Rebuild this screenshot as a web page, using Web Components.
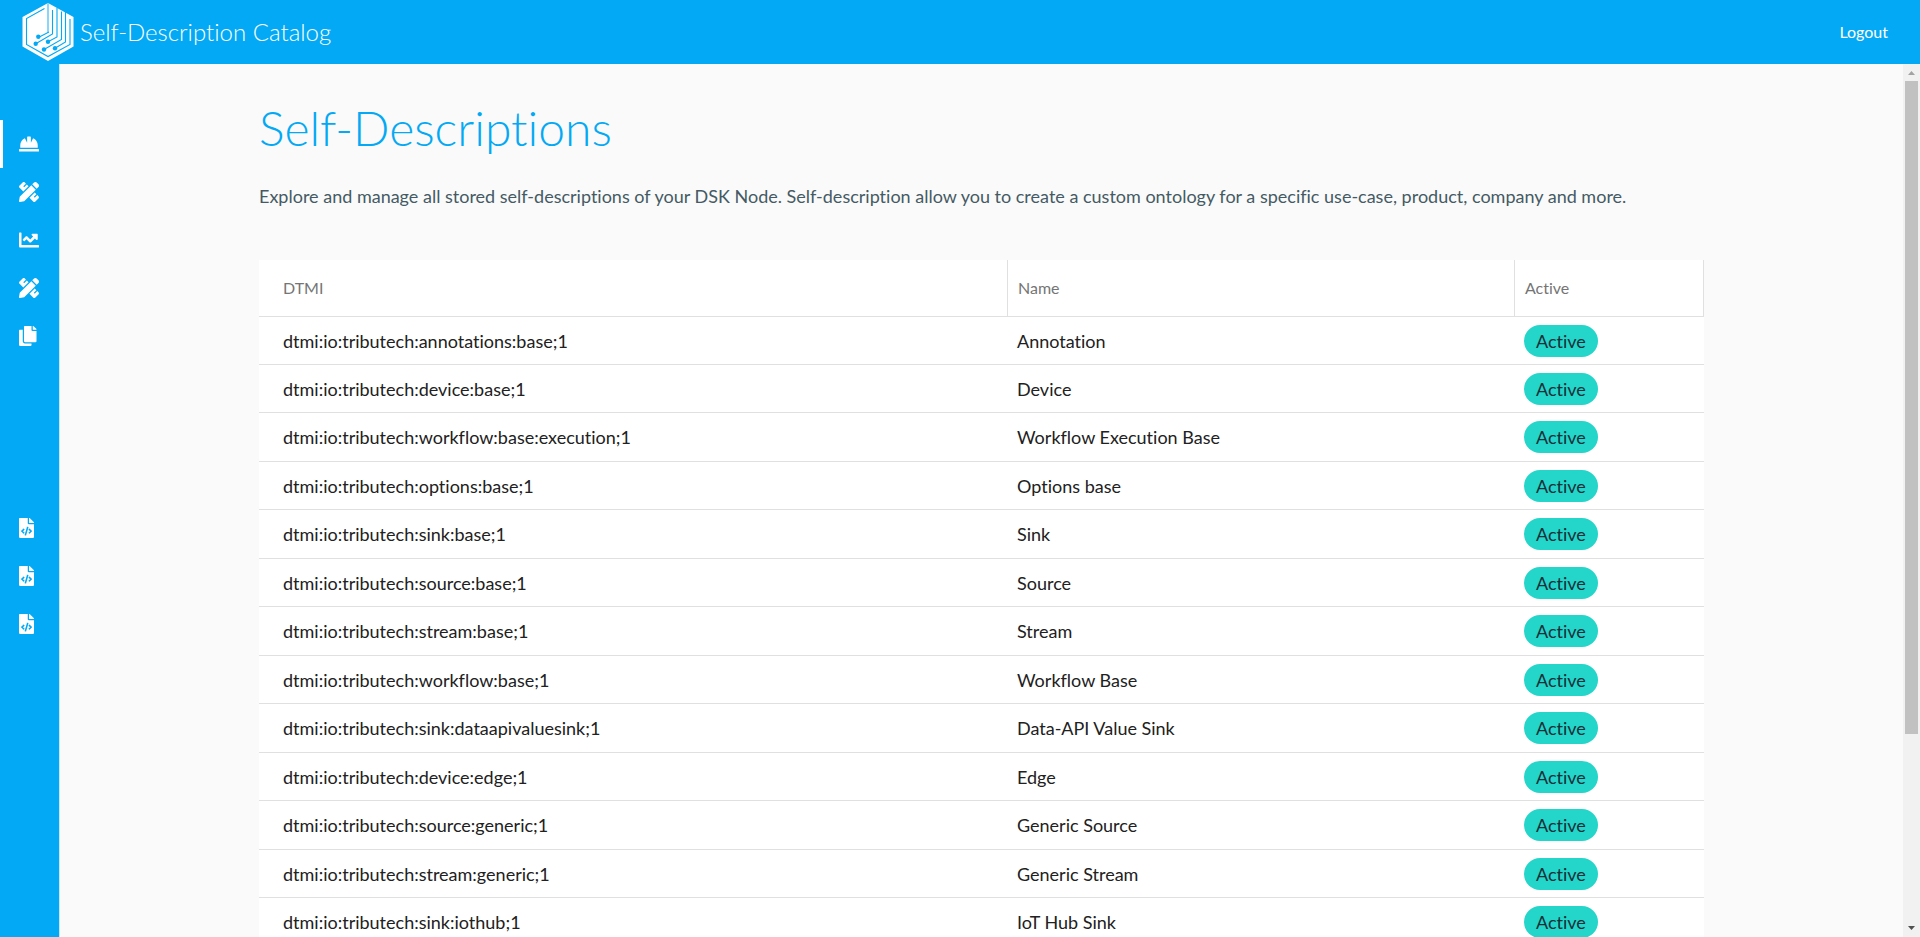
<!DOCTYPE html>
<html lang="en">
<head>
<meta charset="utf-8">
<title>Self-Description Catalog</title>
<style>
html, body { height: 100%; margin: 0; }
body { font-family: Lato, sans-serif; font-variant-ligatures: none; background: #fafafa; overflow: hidden; }
</style>
</head>
<body>
<catalog-app></catalog-app>
<script>
const ICONS = {
  hat: [512, "M480 288c0-80.25-49.28-148.92-119.19-177.62L304 224V80a16 16 0 0 0-16-16h-64a16 16 0 0 0-16 16v144l-56.81-113.62C81.28 139.08 32 207.75 32 288v64h448zm16 96H16a16 16 0 0 0-16 16v32a16 16 0 0 0 16 16h480a16 16 0 0 0 16-16v-32a16 16 0 0 0-16-16z"],
  ruler: [512, "M109.46 244.04l134.58-134.56-44.12-44.12-61.68 61.68a7.919 7.919 0 0 1-11.21 0l-11.21-11.21c-3.1-3.1-3.1-8.12 0-11.21l61.68-61.68-33.64-33.65C131.47-3.1 111.39-3.1 99 9.29L9.29 99c-12.38 12.39-12.39 32.47 0 44.86l100.17 100.18zm388.47-116.8c18.76-18.76 18.75-49.17 0-67.93l-45.25-45.25c-18.76-18.76-49.18-18.76-67.95 0l-46.02 46.01 113.2 113.2 46.02-46.03zM316.08 82.71l-297 296.96L.32 487.11c-2.53 14.49 10.09 27.11 24.59 24.56l107.45-18.84L429.28 195.9 316.08 82.71zm186.63 285.43l-33.64-33.64-61.68 61.68c-3.1 3.1-8.12 3.1-11.21 0l-11.21-11.21c-3.09-3.1-3.09-8.12 0-11.21l61.68-61.68-44.14-44.14L267.93 402.5l100.21 100.2c12.39 12.39 32.47 12.39 44.86 0l89.71-89.7c12.39-12.39 12.39-32.47 0-44.86z"],
  chart: [512, "M496 384H64V80c0-8.84-7.16-16-16-16H16C7.16 64 0 71.16 0 80v336c0 17.67 14.33 32 32 32h464c8.84 0 16-7.16 16-16v-32c0-8.84-7.16-16-16-16zM464 96H345.94c-21.38 0-32.09 25.85-16.97 40.97l32.4 32.4L288 242.75l-73.37-73.37c-12.5-12.5-32.76-12.5-45.25 0l-68.69 68.69c-6.25 6.25-6.25 16.38 0 22.63l22.62 22.62c6.25 6.25 16.38 6.25 22.63 0L192 237.25l73.37 73.37c12.5 12.5 32.76 12.5 45.25 0l96-96 32.4 32.4c15.12 15.12 40.97 4.41 40.97-16.97V112c.01-8.84-7.15-16-15.99-16z"],
  copy: [448, "M320 448v40c0 13.255-10.745 24-24 24H24c-13.255 0-24-10.745-24-24V120c0-13.255 10.745-24 24-24h72v296c0 30.879 25.121 56 56 56h168zm0-344V0H152c-13.255 0-24 10.745-24 24v368c0 13.255 10.745 24 24 24h272c13.255 0 24-10.745 24-24V128H344c-13.2 0-24-10.8-24-24zm120.971-31.029L375.029 7.029A24 24 0 0 0 358.059 0H352v96h96v-6.059a24 24 0 0 0-7.029-16.97z"],
  code: [384, "M384 121.941V128H256V0h6.059c6.365 0 12.47 2.529 16.971 7.029l97.941 97.941A24.005 24.005 0 0 1 384 121.941zM248 160c-13.2 0-24-10.8-24-24V0H24C10.745 0 0 10.745 0 24v464c0 13.255 10.745 24 24 24h336c13.255 0 24-10.745 24-24V160H248zM123.206 400.505a5.4 5.4 0 0 1-7.633.246l-64.866-60.812a5.4 5.4 0 0 1 0-7.879l64.866-60.812a5.4 5.4 0 0 1 7.633.246l19.579 20.885a5.4 5.4 0 0 1-.372 7.747L101.65 336l40.763 35.874a5.4 5.4 0 0 1 .372 7.747l-19.579 20.884zm51.295 50.479l-27.453-7.97a5.402 5.402 0 0 1-3.681-6.692l61.44-211.626a5.402 5.402 0 0 1 6.692-3.681l27.452 7.97a5.4 5.4 0 0 1 3.68 6.692l-61.44 211.626a5.397 5.397 0 0 1-6.69 3.681zm160.792-111.045l-64.866 60.812a5.4 5.4 0 0 1-7.633-.246l-19.58-20.885a5.4 5.4 0 0 1 .372-7.747L284.35 336l-40.763-35.874a5.4 5.4 0 0 1-.372-7.747l19.58-20.885a5.4 5.4 0 0 1 7.633-.246l64.866 60.812a5.4 5.4 0 0 1-.001 7.879z"]
};

class BaseElement extends HTMLElement {
  constructor() {
    super();
    this.attachShadow({ mode: "open" });
  }
  connectedCallback() { this.shadowRoot.innerHTML = this.render(); }
}

customElements.define("catalog-logo", class extends BaseElement {
  render() {
    return `<style>
      :host { display: block; width: 52px; height: 58px; }
      svg { display: block; width: 100%; height: 100%; }
    </style>
    <svg viewBox="0 0 52 58" aria-hidden="true">
      <path fill="#fff" d="M26 0 51.500 14V43.500L26 58 .5 43.500V14z"/>
      <path fill="#8ad6fa" d="M25 0h2v29l-2 1z"/>
      <g fill="none" stroke="#03a9f4" stroke-width="1.100">
        <path d="M22.500 5.500 4.500 15.500V41.500L26 53.500 48 41.500V16"/>
        <path d="M27 29 16.300 34.500"/>
        <path d="M30.500 7V31L13.700 40.700"/>
        <path d="M35 4.500V34L26 38.700"/>
        <path d="M39.500 8.500V36.500L22 46.500"/>
        <path d="M43.500 9V39L33 45.300"/>
      </g>
      <g fill="#03a9f4">
        <circle cx="16.300" cy="33.700" r="2.200"/>
        <circle cx="13.700" cy="40.700" r="2.200"/>
        <circle cx="26" cy="38.700" r="2.200"/>
        <circle cx="22" cy="46.500" r="2.200"/>
        <circle cx="33" cy="45.300" r="2.200"/>
      </g>
    </svg>`;
  }
});

customElements.define("top-bar", class extends BaseElement {
  render() {
    return `<style>
      :host { display: block; }
      header { display: flex; align-items: center; justify-content: space-between; height: 64px; padding: 0 32px 0 22px; box-sizing: border-box; background: #03a9f4; color: #fff; }
      .brand { display: flex; align-items: center; gap: 6px; font-size: 24px; font-weight: 300; line-height: 32px; }
      button { border: 0; padding: 0; background: none; color: inherit; font: 16px/24px Lato, sans-serif; cursor: pointer; }
    </style>
    <header><div class="brand"><catalog-logo></catalog-logo><slot></slot></div><button type="button">Logout</button></header>`;
  }
});

customElements.define("nav-item", class extends BaseElement {
  render() {
    const [w, d] = ICONS[this.getAttribute("icon")];
    return `<style>
      :host { display: block; }
      a { display: flex; align-items: center; height: 48px; padding-left: 16px; border-left: 3px solid transparent; color: #fff; }
      :host([active]) a { border-color: #fff; }
      svg { height: 20px; fill: currentColor; }
    </style>
    <a href="#" aria-label="${this.getAttribute("label")}"><svg viewBox="0 0 ${w} 512"><path d="${d}"/></svg></a>`;
  }
});

customElements.define("side-nav", class extends BaseElement {
  render() {
    return `<style>
      :host { display: block; box-sizing: border-box; width: 60px; background: #03a9f4; border-right: 1px solid #c4e8fa; }
      nav { display: flex; flex-direction: column; padding-top: 56px; }
      .tools { margin-top: 144px; }
    </style>
    <nav aria-label="Main">
      <div>
        <nav-item icon="hat" label="Self-Descriptions" active></nav-item>
        <nav-item icon="ruler" label="Designer"></nav-item>
        <nav-item icon="chart" label="Charts"></nav-item>
        <nav-item icon="ruler" label="Editor"></nav-item>
        <nav-item icon="copy" label="Copies"></nav-item>
      </div>
      <div class="tools">
        <nav-item icon="code" label="Catalog API"></nav-item>
        <nav-item icon="code" label="Twin API"></nav-item>
        <nav-item icon="code" label="Data API"></nav-item>
      </div>
    </nav>`;
  }
});

customElements.define("status-pill", class extends BaseElement {
  render() {
    return `<style>
      :host { display: inline-block; vertical-align: top; height: 32px; padding: 0 12px; border-radius: 16px; background: #24d6c9; color: #132f38; line-height: 32px; }
    </style><slot></slot>`;
  }
});

customElements.define("description-table", class extends BaseElement {
  render() {
    const rows = [
      ["annotations:base", "Annotation"],
      ["device:base", "Device"],
      ["workflow:base:execution", "Workflow Execution Base"],
      ["options:base", "Options base"],
      ["sink:base", "Sink"],
      ["source:base", "Source"],
      ["stream:base", "Stream"],
      ["workflow:base", "Workflow Base"],
      ["sink:dataapivaluesink", "Data-API Value Sink"],
      ["device:edge", "Edge"],
      ["source:generic", "Generic Source"],
      ["stream:generic", "Generic Stream"],
      ["sink:iothub", "IoT Hub Sink"]
    ];
    return `<style>
      :host { display: block; }
      table { width: 100%; table-layout: fixed; border-collapse: separate; border-spacing: 0; background: #fff; color: #212121; font-size: 18px; }
      th, td { box-sizing: border-box; padding: 0 9px; border-bottom: 1px solid #e0e0e0; text-align: left; line-height: 24px; }
      th { height: 57px; padding: 0 10px; border-right: 1px solid #e0e0e0; color: #757575; font-size: 16px; font-weight: 400; }
      td { height: 48px; }
      tbody tr:nth-child(odd):not(:first-child) td { height: 49px; }
      th:first-child, td:first-child { padding-left: 24px; }
      .dtmi { width: 749px; }
      .active { width: 189px; }
    </style>
    <table>
      <colgroup><col class="dtmi"><col><col class="active"></colgroup>
      <thead><tr><th>DTMI</th><th>Name</th><th>Active</th></tr></thead>
      <tbody>${rows.map(([id, name]) => `<tr><td>dtmi:io:tributech:${id};1</td><td>${name}</td><td><status-pill>Active</status-pill></td></tr>`).join("")}</tbody>
    </table>`;
  }
});

customElements.define("scroll-track", class extends BaseElement {
  render() {
    return `<style>
      :host { display: flex; flex-direction: column; width: 17px; background: #f1f1f1; }
      svg { display: block; width: 17px; height: 17px; flex: none; }
      .thumb { flex: 7; margin: 0 2px; background: #c1c1c1; }
      .rest { flex: 2; }
    </style>
    <svg viewBox="0 0 17 17"><path fill="#a3a3a3" d="M5 11h7L8.500 7z"/></svg>
    <div class="thumb"></div><div class="rest"></div>
    <svg viewBox="0 0 17 17"><path fill="#505050" d="M5 6h7L8.500 10z"/></svg>`;
  }
});

customElements.define("catalog-app", class extends BaseElement {
  render() {
    return `<style>
      :host { display: flex; flex-direction: column; height: 100vh; }
      .body { display: flex; flex: 1; min-height: 0; }
      main { flex: 1; min-width: 0; overflow: hidden; }
      .content { max-width: 1445px; margin: 0 auto; padding-top: 32px; }
      h1 { margin: 0; color: #03a9f4; font-size: 48px; font-weight: 300; line-height: 64px; }
      p { margin: 24px 0 52px; color: #455a64; font-size: 18px; line-height: 24px; }
    </style>
    <top-bar>Self-Description Catalog</top-bar>
    <div class="body">
      <side-nav></side-nav>
      <main><div class="content">
        <h1>Self-Descriptions</h1>
        <p>Explore and manage all stored self-descriptions of your DSK Node. Self-description allow you to create a custom ontology for a specific use-case, product, company and more.</p>
        <description-table></description-table>
      </div></main>
      <scroll-track></scroll-track>
    </div>`;
  }
});
</script>
</body>
</html>
